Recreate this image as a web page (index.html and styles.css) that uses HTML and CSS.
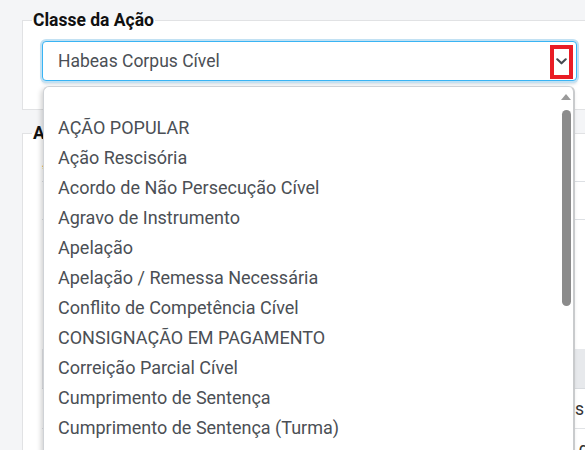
FILE: index.html
```html
<!DOCTYPE html>
<html lang="pt-BR">
<head>
<meta charset="utf-8">
<title>Classe da Ação</title>
<link rel="stylesheet" href="styles.css">
</head>
<body>
<div class="page">
  <fieldset class="panel panel-first">
    <legend class="legend">Classe da Ação</legend>
    <div class="panel-body">
      <div class="select">
        <span class="select-value">Habeas Corpus Cível</span>
        <span class="select-toggle">
          <svg width="11" height="7" viewBox="0 0 11 7" aria-hidden="true"><path d="M1.3 1.3 L5.5 5.3 L9.7 1.3" fill="none" stroke="#454a50" stroke-width="2.1" stroke-linecap="round" stroke-linejoin="round"/></svg>
        </span>
      </div>
    </div>
  </fieldset>

  <fieldset class="panel panel-second">
    <legend class="legend">Assunto</legend>
    <div class="panel-body second-body">
      <div class="field-line first-line"><span class="req">*</span></div>
      <div class="field-line"></div>
      <div class="spacer"></div>
      <div class="table">
        <div class="table-head"></div>
        <div class="table-row"><span class="cell-text">Assuntos</span><span class="orange">(</span></div>
        <div class="table-row"><span class="cell-text wide">Verificando de</span></div>
      </div>
    </div>
  </fieldset>
</div>

<div class="dropdown" role="listbox">
  <ul class="options">
    <li class="option blank"></li>
    <li class="option">AÇÃO POPULAR</li>
    <li class="option">Ação Rescisória</li>
    <li class="option">Acordo de Não Persecução Cível</li>
    <li class="option">Agravo de Instrumento</li>
    <li class="option">Apelação</li>
    <li class="option">Apelação / Remessa Necessária</li>
    <li class="option">Conflito de Competência Cível</li>
    <li class="option">CONSIGNAÇÃO EM PAGAMENTO</li>
    <li class="option">Correição Parcial Cível</li>
    <li class="option">Cumprimento de Sentença</li>
    <li class="option">Cumprimento de Sentença (Turma)</li>
  </ul>
  <div class="scrollbar">
    <div class="scroll-up"></div>
    <div class="scroll-thumb"></div>
  </div>
</div>
</body>
</html>
```

FILE: styles.css
```css
*, *::before, *::after {
  box-sizing: border-box;
}
html, body {
  margin: 0;
  padding: 0;
}
body {
  width: 585px;
  height: 450px;
  overflow: hidden;
  background: #f4f5f7;
  font-family: Roboto, "Liberation Sans", sans-serif;
  position: relative;
}
.page {
  padding: 11px 0 0 22px;
  width: 640px;
}
.panel {
  margin: 0;
  padding: 0;
  background: #ffffff;
  border: 1px solid #e1e2e4;
  border-right: none;
  min-width: 0;
}
.legend {
  margin-left: 9px;
  padding: 0 1px;
  font-weight: 700;
  font-size: 17.5px;
  line-height: 19px;
  color: #111;
}
.panel-body {
  padding: 11px 0 28px 19px;
}
.select {
  width: 535px;
  height: 40px;
  border: 1px solid #39b4f4;
  border-radius: 4px;
  box-shadow: 0 0 0 2px #c2e1f3, 0 3px 3px rgba(120, 150, 170, 0.35);
  display: flex;
  align-items: center;
  justify-content: space-between;
  padding: 0 3px 0 15px;
  background: #fff;
}
.select-value {
  font-size: 17.5px;
  color: #4b4f55;
}
.select-toggle {
  width: 23px;
  height: 34px;
  border: 4px solid #e91d25;
  display: flex;
  align-items: center;
  justify-content: center;
  margin-top: 1px;
}
.panel-second {
  margin-top: 14px;
  height: 360px;
}
.second-body {
  padding: 0 0 0 19px;
}
.field-line {
  height: 38px;
  border-bottom: 1px solid #dde0e4;
}
.first-line {
  height: 39px;
  padding: 20px 0 0 0;
}
.req {
  display: block;
  color: #f0a030;
  font-size: 12px;
  line-height: 12px;
}
.spacer {
  height: 129px;
}
.table-head {
  height: 40px;
  background: #e7e9ec;
  border-bottom: 1px solid #d8dbdf;
}
.table-row {
  height: 40px;
  border-bottom: 1px solid #e1e3e6;
  display: flex;
  align-items: center;
  font-size: 17.5px;
  color: #333;
}
.cell-text {
  width: 542px;
  text-align: right;
  white-space: nowrap;
}
.cell-text.wide {
  width: 556px;
}
.orange {
  color: #f0a040;
  padding-left: 1px;
}

.dropdown {
  position: absolute;
  left: 43px;
  top: 86px;
  width: 532px;
  height: 420px;
  background: #fff;
  border: 1px solid #cfd2d6;
  border-right: 2px solid #c9cbcd;
  border-radius: 6px 6px 0 0;
  box-shadow: -2px 2px 5px rgba(0, 0, 0, 0.18);
  display: flex;
}
.options {
  list-style: none;
  margin: 0;
  padding: 0;
  flex: 1;
}
.option {
  height: 30px;
  line-height: 30px;
  padding-left: 14px;
  font-size: 18px;
  color: #4b4f55;
  white-space: nowrap;
}
.option.blank {
  height: 26px;
}
.scrollbar {
  width: 14px;
  display: flex;
  flex-direction: column;
  align-items: center;
  padding-top: 7px;
}
.scroll-up {
  width: 0;
  height: 0;
  border-left: 5px solid transparent;
  border-right: 5px solid transparent;
  border-bottom: 6px solid #9a9a9a;
}
.scroll-thumb {
  margin-top: 10px;
  width: 9px;
  height: 196px;
  border-radius: 5px;
  background: #8b8b8b;
}
```
